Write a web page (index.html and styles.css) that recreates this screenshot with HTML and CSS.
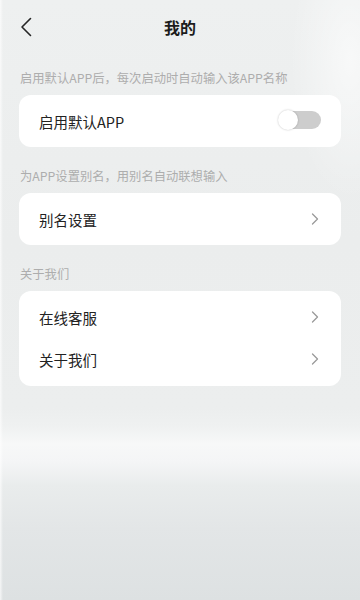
FILE: index.html
```html
<!DOCTYPE html>
<html lang="zh-CN">
<head>
<meta charset="utf-8">
<title>我的</title>
<link rel="stylesheet" href="styles.css">
</head>
<body>
<div class="page">
  <header class="nav">
    <span class="back">
      <svg width="14" height="20" viewBox="0 0 14 20"><path d="M11.5 1.5 L3 10 L11.5 18.5" fill="none" stroke="#262626" stroke-width="1.6" stroke-linecap="round" stroke-linejoin="round"/></svg>
    </span>
    <h1 class="title">我的</h1>
  </header>

  <p class="label">启用默认APP后，每次启动时自动输入该APP名称</p>
  <section class="card card-single">
    <div class="row">
      <span class="row-text">启用默认APP</span>
      <span class="switch"><span class="knob"></span></span>
    </div>
  </section>

  <p class="label">为APP设置别名，用别名自动联想输入</p>
  <section class="card card-single">
    <div class="row">
      <span class="row-text">别名设置</span>
      <svg class="chev" width="8" height="12" viewBox="0 0 8 12"><path d="M1.5 1 L6.5 6 L1.5 11" fill="none" stroke="#9a9a9a" stroke-width="1.3" stroke-linecap="round" stroke-linejoin="round"/></svg>
    </div>
  </section>

  <p class="label">关于我们</p>
  <section class="card card-list">
    <div class="row row-list">
      <span class="row-text">在线客服</span>
      <svg class="chev" width="8" height="12" viewBox="0 0 8 12"><path d="M1.5 1 L6.5 6 L1.5 11" fill="none" stroke="#9a9a9a" stroke-width="1.3" stroke-linecap="round" stroke-linejoin="round"/></svg>
    </div>
    <div class="row row-list">
      <span class="row-text">关于我们</span>
      <svg class="chev" width="8" height="12" viewBox="0 0 8 12"><path d="M1.5 1 L6.5 6 L1.5 11" fill="none" stroke="#9a9a9a" stroke-width="1.3" stroke-linecap="round" stroke-linejoin="round"/></svg>
    </div>
  </section>
</div>
</body>
</html>
```

FILE: styles.css
```css
html, body {
  margin: 0;
  padding: 0;
}
body {
  width: 360px;
  height: 600px;
  overflow: hidden;
  font-family: "Noto Sans CJK SC", "Noto Sans", sans-serif;
  background:
    radial-gradient(ellipse 60px 140px at 350px 60px, rgba(255,255,255,0.6), rgba(255,255,255,0) 100%),
    linear-gradient(90deg, rgba(255,255,255,0.7) 0, rgba(255,255,255,0) 3px),
    linear-gradient(180deg,
      #eef0f0 0%,
      #ebeded 40%,
      #eceeee 68%,
      #eff1f1 71%,
      #f7f8f8 74%,
      #f4f5f6 77%,
      #e9ecec 81%,
      #e3e6e7 88%,
      #dde1e2 100%);
}
.page {
  display: flex;
  flex-direction: column;
}
.nav {
  height: 54px;
  display: flex;
  align-items: center;
  justify-content: center;
  position: relative;
}
.back {
  position: absolute;
  left: 19px;
  top: 17px;
  width: 14px;
  height: 20px;
  display: flex;
}
.title {
  margin: 0;
  font-size: 16px;
  font-weight: 700;
  color: #1c1c1c;
  line-height: 20px;
}
.label {
  margin: 16px 0 9px 20px;
  font-size: 12.3px;
  line-height: 16px;
  color: #adadad;
}
.card {
  margin: 0 19px;
  background: #fff;
  border-radius: 12px;
}
.card + .label {
  margin-top: 21px;
}
.card-list {
  padding: 5px 0 6px;
}
.row {
  height: 52px;
  display: flex;
  align-items: center;
  justify-content: space-between;
  padding: 0 20px;
}
.row-list {
  height: 42px;
}
.row-text {
  font-size: 14.5px;
  color: #222;
}
.chev {
  margin-right: 2px;
}
.switch {
  position: relative;
  width: 42px;
  height: 18px;
  border-radius: 9px;
  background: #cdcdcd;
  margin-bottom: 3px;
}
.knob {
  position: absolute;
  left: -1px;
  top: -1px;
  width: 20px;
  height: 20px;
  border-radius: 50%;
  background: #fff;
  box-shadow: 0 0 2px rgba(0,0,0,0.25);
}
```
